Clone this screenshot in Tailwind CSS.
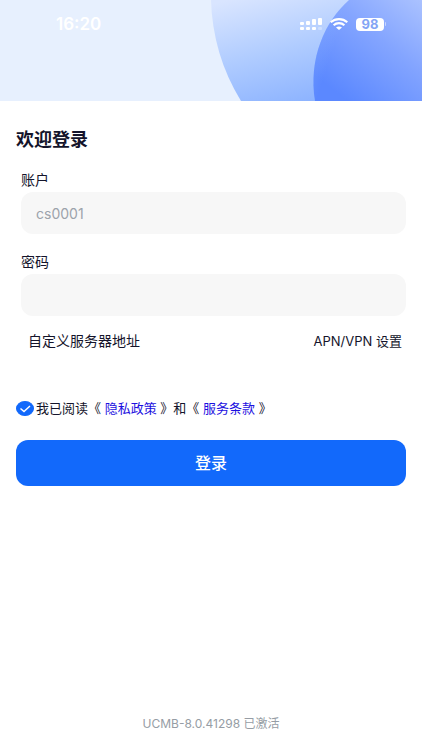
<!DOCTYPE html>
<html lang="zh-CN">
<head>
    <meta charset="UTF-8">
    <meta name="viewport" content="width=device-width, initial-scale=1.0">
    <title>欢迎登录</title>
    <script src="https://cdn.jsdelivr.net/npm/@tailwindcss/browser@4"></script>
</head>
<body class="flex min-h-screen flex-col bg-white font-[Inter,'Noto_Sans_CJK_SC',sans-serif] text-[#14142b]">

    <!-- Header -->
    <header class="relative h-[101px] overflow-hidden bg-[#e7f0fe]">
        <svg class="absolute inset-0 h-full w-full" viewBox="0 0 422 101" preserveAspectRatio="none" aria-hidden="true">
            <defs>
                <linearGradient id="big" gradientUnits="userSpaceOnUse" x1="260" y1="-8" x2="290" y2="110">
                    <stop offset="0" stop-color="#d9e5ff"/>
                    <stop offset="0.5" stop-color="#b0ccff"/>
                    <stop offset="1" stop-color="#8bb2ff"/>
                </linearGradient>
                <linearGradient id="small" gradientUnits="userSpaceOnUse" x1="425" y1="-15" x2="340" y2="95">
                    <stop offset="0" stop-color="#b4c9ff"/>
                    <stop offset="0.5" stop-color="#84a5ff"/>
                    <stop offset="1" stop-color="#5b88ff"/>
                </linearGradient>
                <linearGradient id="edge" gradientUnits="userSpaceOnUse" x1="308" y1="0" x2="345" y2="12">
                    <stop offset="0" stop-color="#8bb2ff" stop-opacity="0.6"/>
                    <stop offset="1" stop-color="#8bb2ff" stop-opacity="0"/>
                </linearGradient>
            </defs>
            <path d="M211 0C212 36 222 70 241 101H422V0Z" fill="url(#big)"/>
            <path d="M349 0C325 21 308 59 315 101H422V0Z" fill="url(#small)"/>
            <path d="M349 0C325 21 308 59 315 101H422V0Z" fill="url(#edge)"/>
        </svg>

        <!-- Status bar -->
        <div class="relative flex items-center justify-between pt-3 pr-9 pl-14 text-white">
            <span class="text-[17px] leading-6 font-semibold">16:20</span>
            <div class="flex items-center gap-2">
                <svg class="h-3 w-[22px]" viewBox="0 0 22 12" fill="currentColor" aria-hidden="true">
                    <rect x="0" y="4" width="4" height="3" rx="1"/>
                    <rect x="6" y="3" width="4" height="4" rx="1"/>
                    <rect x="12" y="1" width="4" height="6" rx="1"/>
                    <rect x="18" y="0" width="4" height="7" rx="1"/>
                    <rect x="0" y="9" width="4" height="3" rx="1"/>
                    <rect x="6" y="9" width="4" height="3" rx="1"/>
                    <rect x="12" y="9" width="4" height="3" rx="1"/>
                    <rect x="18" y="9" width="4" height="3" rx="1" opacity="0.3"/>
                </svg>
                <svg class="h-3 w-[18px]" viewBox="0 0 18 12" fill="none" stroke="currentColor" stroke-width="2.2" aria-hidden="true">
                    <path d="M0.700 4.300C5.400 0.100 12.600 0.100 17.300 4.300"/>
                    <path d="M3.600 7.300C6.700 4.500 11.300 4.500 14.400 7.300"/>
                    <path d="M9 12L6 9.500C7.700 8 10.300 8 12 9.500Z" fill="currentColor" stroke="none"/>
                </svg>
                <div class="flex items-center gap-px">
                    <span class="flex h-[13px] w-7 items-center justify-center rounded bg-white text-[13px] leading-3 font-bold text-[#84a5f5]">98</span>
                    <span class="h-1 w-px rounded-r bg-white/50"></span>
                </div>
            </div>
        </div>
    </header>

    <!-- Login form -->
    <main class="px-4 pt-[27px]">
        <h1 class="text-lg leading-6 font-bold">欢迎登录</h1>
        <form>
            <div class="pt-[18px] pl-[5px]">
                <label for="account" class="block text-sm leading-5">账户</label>
                <input id="account" type="text" placeholder="cs0001" class="mt-[2px] block h-[42px] w-full rounded-xl bg-[#f7f7f7] px-[15px] text-sm placeholder:text-[#9ca3ab]">
                <label for="password" class="mt-[18px] block text-sm leading-5">密码</label>
                <input id="password" type="password" class="mt-[2px] block h-[42px] w-full rounded-xl bg-[#f7f7f7] px-[15px] text-sm">
            </div>
            <div class="mt-[15px] flex justify-between pr-1 pl-3 text-sm leading-5">
                <button type="button">自定义服务器地址</button>
                <button type="button" class="text-[13px]">APN/VPN 设置</button>
            </div>

            <!-- Agreement -->
            <div class="mt-[47px] flex items-center gap-[2px] text-[13px] leading-5">
                <span class="relative flex h-[15px] w-[18px] shrink-0">
                    <input id="agree" type="checkbox" checked class="h-full w-full appearance-none rounded-[50%] border border-[#1269fb] checked:bg-[#1269fb]">
                    <svg class="pointer-events-none absolute inset-0 h-full w-full" viewBox="0 0 18 15" fill="none" stroke="white" stroke-width="1.500" aria-hidden="true">
                        <path d="M4.500 7.500L8 10.500L14 5"/>
                    </svg>
                </span>
                <p><label for="agree">我已阅读《</label> <a href="#privacy" class="text-[#1c10e0]">隐私政策</a> 》和《 <a href="#terms" class="text-[#1c10e0]">服务条款</a> 》</p>
            </div>

            <button type="submit" class="mt-[22px] block h-[46px] w-full rounded-xl bg-[#1269fb] text-base font-medium text-white">登录</button>
        </form>
    </main>

    <!-- Footer -->
    <footer class="mt-auto pb-4 text-center text-xs leading-5 text-[#969da5]">UCMB-8.0.41298 已激活</footer>
</body>
</html>
